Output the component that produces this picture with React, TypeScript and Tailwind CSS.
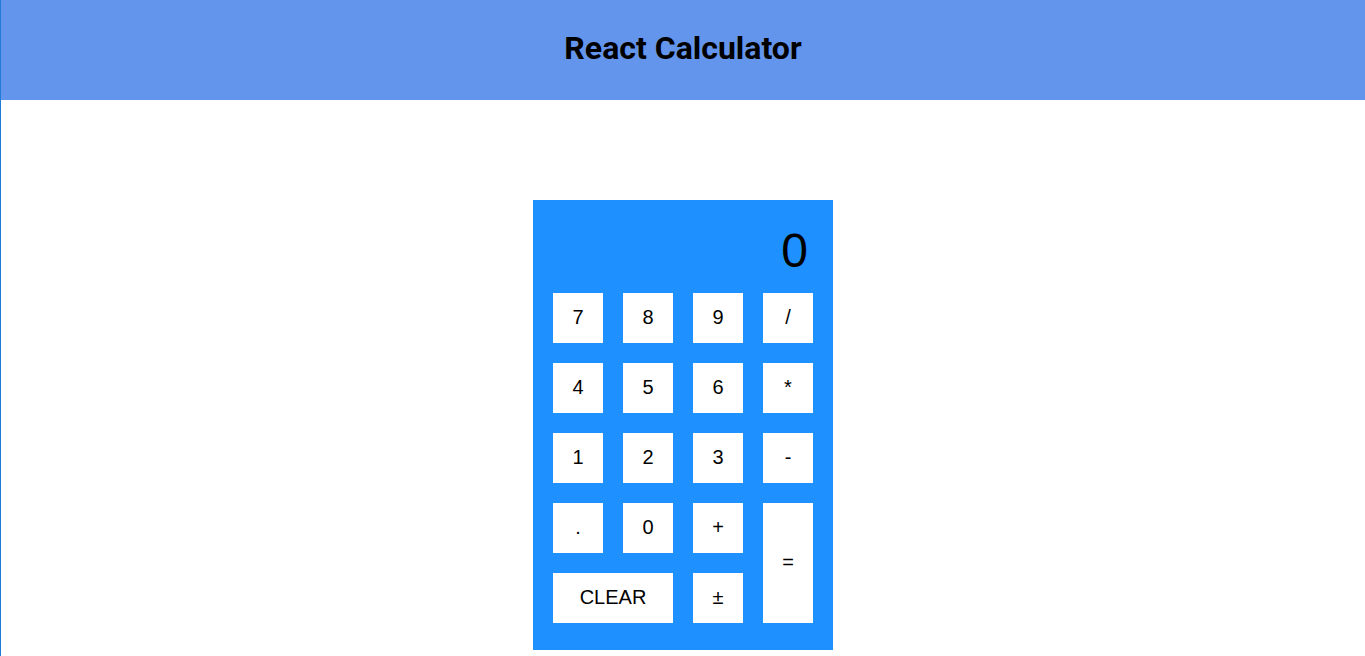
const rows: string[][] = [
  ["7", "8", "9", "/"],
  ["4", "5", "6", "*"],
  ["1", "2", "3", "-"],
];

function Key({ label, className = "" }: { label: string; className?: string }) {
  return (
    <button
      className={
        "flex items-center justify-center bg-white pb-[2px] text-[20px] text-black " +
        className
      }
    >
      {label}
    </button>
  );
}

export default function App() {
  return (
    <div className="min-h-[656px] border-l border-[#1f7bd8] bg-white font-['Liberation_Sans',Arial,sans-serif]">
      <header className="flex h-[100px] items-center justify-center bg-[#6495ed] pb-[5px]">
        <h1 className="font-['Roboto',sans-serif] text-[32px] font-bold text-black">
          React Calculator
        </h1>
      </header>

      <main className="flex justify-center pt-[100px]">
        <div className="w-[300px] bg-[#1e90ff] px-5 pb-[27px]">
          <div className="flex h-[93px] items-center justify-end pr-[5px] pt-[9px] text-[48px] text-black">
            0
          </div>
          <div className="grid grid-cols-[repeat(4,50px)] grid-rows-[repeat(5,50px)] gap-5">
            {rows.flat().map((k) => (
              <Key key={k} label={k} />
            ))}
            <Key label="." />
            <Key label="0" />
            <Key label="+" />
            <Key label="=" className="row-span-2" />
            <Key label="CLEAR" className="col-span-2" />
            <Key label="±" />
          </div>
        </div>
      </main>
    </div>
  );
}
